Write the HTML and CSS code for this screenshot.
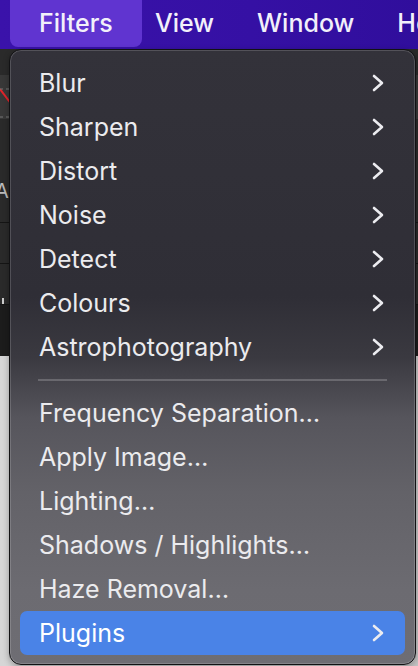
FILE: index.html
```html
<!DOCTYPE html>
<html>
<head>
<meta charset="utf-8">
<link rel="stylesheet" href="styles.css">
</head>
<body>
<div class="screen">
  <header class="menubar">
    <span class="mb-item active">Filters</span>
    <span class="mb-item first">View</span>
    <span class="mb-item">Window</span>
    <span class="mb-item">Help</span>
  </header>
  <main class="workspace">
    <div class="ws-dark">
      <div class="ws-band">
        <svg class="ws-red" width="20" height="44" viewBox="0 0 20 44"><line x1="0" y1="14" x2="12" y2="30" stroke="#e0242a" stroke-width="2"/><line x1="0" y1="14" x2="20" y2="14" stroke="#777" stroke-dasharray="3 3" stroke-width="1"/><line x1="0" y1="42" x2="20" y2="42" stroke="#777" stroke-dasharray="3 3" stroke-width="1"/></svg>
      </div>
      <div class="ws-row ws-letter"><span>A</span></div>
      <div class="ws-row ws-line"></div>
      <div class="ws-row ws-line2"><span class="tick"></span></div>
      <div class="ws-black"></div>
    </div>
    <div class="ws-light"></div>
  </main>

  <nav class="menu">
    <div class="item">Blur<svg class="chev" viewBox="0 0 12 18"><polyline points="2,2 10,9 2,16"/></svg></div>
    <div class="item">Sharpen<svg class="chev" viewBox="0 0 12 18"><polyline points="2,2 10,9 2,16"/></svg></div>
    <div class="item">Distort<svg class="chev" viewBox="0 0 12 18"><polyline points="2,2 10,9 2,16"/></svg></div>
    <div class="item">Noise<svg class="chev" viewBox="0 0 12 18"><polyline points="2,2 10,9 2,16"/></svg></div>
    <div class="item">Detect<svg class="chev" viewBox="0 0 12 18"><polyline points="2,2 10,9 2,16"/></svg></div>
    <div class="item">Colours<svg class="chev" viewBox="0 0 12 18"><polyline points="2,2 10,9 2,16"/></svg></div>
    <div class="item">Astrophotography<svg class="chev" viewBox="0 0 12 18"><polyline points="2,2 10,9 2,16"/></svg></div>
    <div class="sep"></div>
    <div class="item">Frequency Separation…</div>
    <div class="item">Apply Image…</div>
    <div class="item">Lighting…</div>
    <div class="item">Shadows / Highlights…</div>
    <div class="item">Haze Removal…</div>
    <div class="item selected">Plugins<svg class="chev" viewBox="0 0 12 18"><polyline points="2,2 10,9 2,16"/></svg></div>
  </nav>
</div>
</body>
</html>
```
FILE: styles.css
```css
html, body {
  margin: 0;
  padding: 0;
}
body {
  width: 418px;
  height: 666px;
  overflow: hidden;
  font-family: Inter, "Noto Sans", "Liberation Sans", sans-serif;
}
.screen {
  position: relative;
  width: 418px;
  height: 666px;
  display: flex;
  flex-direction: column;
}
.menubar {
  height: 49px;
  flex: none;
  box-sizing: border-box;
  background: linear-gradient(90deg, #3a12aa, #3510a4 60%, #300e9c);
  display: flex;
  align-items: flex-start;
  padding-left: 10px;
  color: #f2f0fa;
  font-size: 25px;
  font-weight: 500;
  white-space: nowrap;
  overflow: hidden;
}
.mb-item {
  height: 45px;
  display: flex;
  align-items: center;
  box-sizing: border-box;
  margin-left: 43px;
  flex: none;
}
.mb-item.first { margin-left: 13px; }
.mb-item.active {
  margin-left: 0;
  width: 132px;
  padding-left: 29px;
  height: 47px;
  padding-bottom: 2px;
  background: #6034d0;
  border-radius: 0 0 8px 8px;
}
.workspace {
  flex: 1;
  display: flex;
  flex-direction: column;
}
.ws-dark {
  height: 307px;
  background: #2a2a2a;
  display: flex;
  flex-direction: column;
}
.ws-band {
  height: 44px;
  margin-top: 26px;
  background: #383838;
}
.ws-red { display: block; }
.ws-row {
  height: 40px;
  border-bottom: 1px solid #151515;
}
.ws-letter {
  height: 103px;
  display: flex;
  align-items: center;
  color: #bbb;
  font-size: 20px;
}
.ws-letter span { margin-left: -5px; margin-top: 40px; }
.ws-line2 { position: relative; }
.tick {
  position: absolute;
  left: 2px;
  top: 34px;
  width: 2px;
  height: 6px;
  background: #ccc;
}
.ws-black {
  flex: 1;
  background: #1c1c1c;
}
.ws-light {
  flex: 1;
  background: linear-gradient(90deg, #d6d6d6, #c4c4c4);
}

.menu {
  position: absolute;
  left: 9px;
  top: 49px;
  width: 407px;
  height: 616px;
  box-sizing: border-box;
  border: 1px solid #121214;
  border-radius: 12px;
  box-shadow: inset 0 0 0 1px rgba(255,255,255,0.16), 0 2px 6px rgba(0,0,0,0.3);
  background: linear-gradient(180deg, #33323a 0%, #2f2e36 40%, #3a3940 50%, #56555c 60%, #636268 72%, #6c6b71 88%, #6e6d73 100%);
  padding: 11px 10px 10px;
  display: flex;
  flex-direction: column;
  color: #ebebee;
  font-size: 25px;
  font-weight: 400;
}
.item {
  height: 44px;
  flex: none;
  display: flex;
  align-items: center;
  justify-content: space-between;
  padding: 0 21px 0 19px;
  border-radius: 7px;
  white-space: nowrap;
}
.item.selected {
  background: #4a83e7;
  color: #fff;
}
.chev {
  width: 12px;
  height: 18px;
  fill: none;
  stroke: #ececf0;
  stroke-width: 2.6;
  stroke-linecap: round;
  stroke-linejoin: round;
}
.sep {
  height: 22px;
  flex: none;
  margin: 0 18px;
  display: flex;
  align-items: center;
}
.sep::before {
  content: "";
  flex: 1;
  height: 2px;
  background: rgba(255,255,255,0.2);
}
```
